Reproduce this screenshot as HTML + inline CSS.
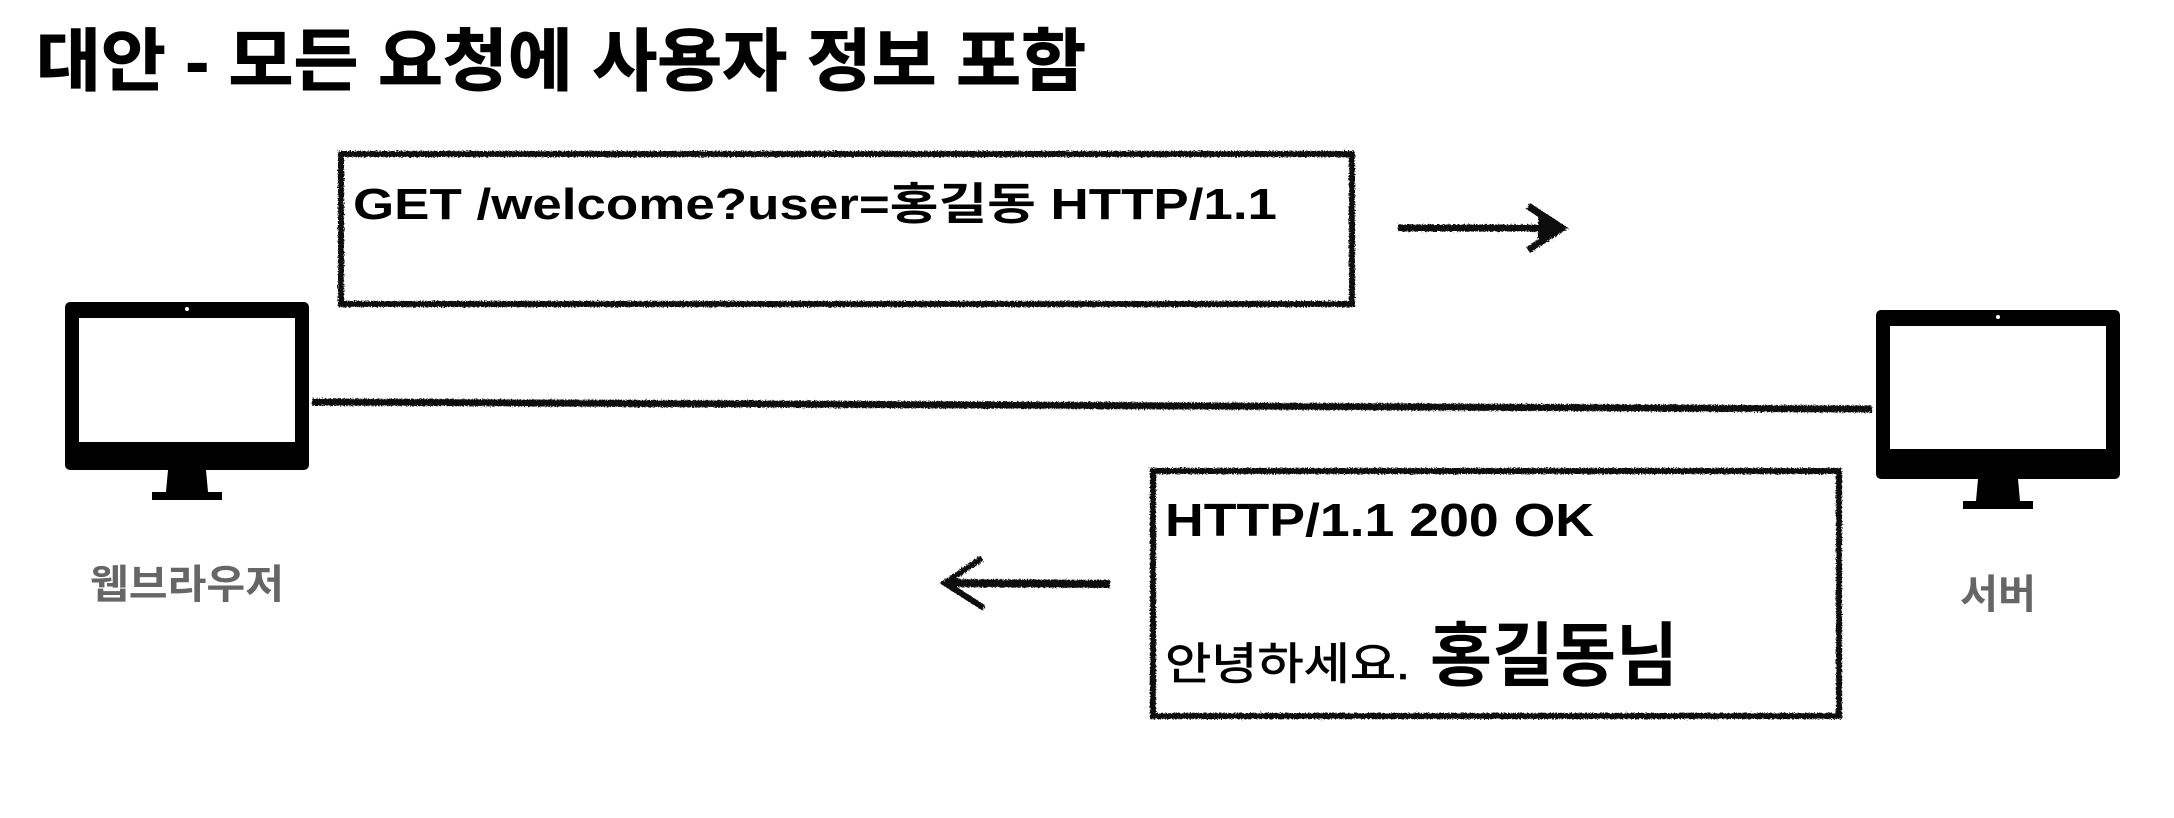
<!DOCTYPE html>
<html><head><meta charset="utf-8"><style>
html,body{margin:0;padding:0;background:#fff;width:2174px;height:818px;overflow:hidden}
svg text{font-family:"Liberation Sans","Noto Sans CJK KR",sans-serif;font-weight:bold}
</style></head><body>
<svg width="2174" height="818" viewBox="0 0 2174 818" xmlns="http://www.w3.org/2000/svg">
<defs>
<filter id="rough"><feTurbulence type="fractalNoise" baseFrequency="0.7" numOctaves="2" seed="3"/><feDisplacementMap in="SourceGraphic" scale="4"/></filter>
</defs>
<text x="36" y="85" font-size="68" textLength="1050" lengthAdjust="spacingAndGlyphs" fill="#000" stroke="#000" stroke-width="1">대안 - 모든 요청에 사용자 정보 포함</text>

<g filter="url(#rough)" stroke="#111" fill="none">
<rect x="341" y="154" width="1011" height="150" stroke-width="6"/>
<rect x="1153" y="471" width="686" height="245" stroke-width="6"/>
<path d="M312 402 L1872 409" stroke-width="7"/>
<path d="M1398 228 L1555 228" stroke-width="7"/>
<path d="M1528 206 L1562 228 L1528 250" stroke-width="7"/>
<path d="M1540 220 L1560 228 L1540 236 Z" fill="#111" stroke-width="4"/>
<path d="M948 583 L1110 584" stroke-width="8"/>
<path d="M982 558 L945 583 L984 608" stroke-width="6"/>
</g>
<text x="353" y="219" font-size="44" textLength="924" lengthAdjust="spacingAndGlyphs" fill="#000">GET /welcome?user=홍길동 HTTP/1.1</text>
<text x="1165" y="536" font-size="46" textLength="429" lengthAdjust="spacingAndGlyphs" fill="#000">HTTP/1.1 200 OK</text>
<text x="1165" y="679" font-size="44" textLength="245" lengthAdjust="spacingAndGlyphs" fill="#000" style="font-weight:normal" stroke="#000" stroke-width="0.8">안녕하세요.</text>
<text x="1430" y="680" font-size="70" textLength="248" lengthAdjust="spacingAndGlyphs" fill="#000">홍길동님</text>

<rect x="65" y="302" width="244" height="168" rx="5" fill="#000"/>
<rect x="79" y="318" width="216" height="124" fill="#fff"/>
<circle cx="187" cy="309" r="2" fill="#fff"/>
<path d="M168 470 L206 470 L208 492 L166 492 Z" fill="#000"/>
<rect x="152" y="492" width="70" height="8" fill="#000"/>
<text x="90" y="598" font-size="40" textLength="194" lengthAdjust="spacingAndGlyphs" fill="#666">웹브라우저</text>

<rect x="1876" y="310" width="244" height="169" rx="5" fill="#000"/>
<rect x="1890" y="326" width="216" height="123" fill="#fff"/>
<circle cx="1998" cy="317" r="2" fill="#fff"/>
<path d="M1978 479 L2018 479 L2020 501 L1976 501 Z" fill="#000"/>
<rect x="1963" y="501" width="70" height="8" fill="#000"/>
<text x="1960" y="608" font-size="40" textLength="76" lengthAdjust="spacingAndGlyphs" fill="#666">서버</text>
</svg>
</body></html>
